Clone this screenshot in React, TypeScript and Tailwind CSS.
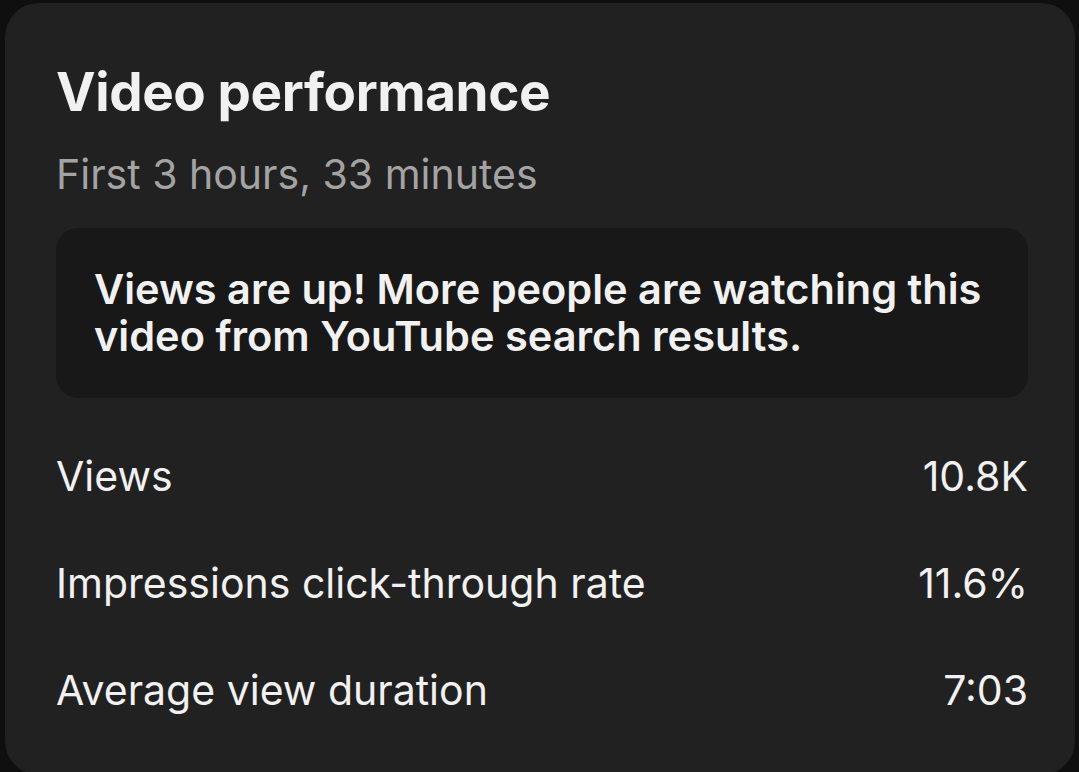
export default function App() {
  const rows = [
    { label: 'Views', value: '10.8K' },
    { label: 'Impressions click-through rate', value: '11.6%' },
    { label: 'Average view duration', value: '7:03' },
  ]

  return (
    <div className="w-[1079px] h-[772px] overflow-hidden bg-[#0f0f0f] pt-[3px] pl-[5px] pr-[4px] font-['Inter',sans-serif]">
      <div className="h-[772px] rounded-[34px] bg-[#212121] pl-[51px] pr-[47px] pt-[57px] text-[#f1f1f1]">
        <h1 className="text-[53px] leading-[64px] font-bold tracking-[-0.4px]">Video performance</h1>
        <div className="mt-[25px] text-[41px] leading-[50px] text-[#a3a3a3]">First 3 hours, 33 minutes</div>
        <div className="mt-[29px] rounded-[22px] bg-[#181818] pl-[38px] pr-[30px] pt-[38px] pb-[38px]">
          <p className="text-[41.5px] leading-[47px] font-semibold">
            Views are up! More people are watching this video from YouTube search results.
          </p>
        </div>
        <div className="mt-[54px] flex flex-col gap-[58px]">
          {rows.map(r => (
            <div key={r.label} className="flex justify-between text-[41px] leading-[49px]">
              <span>{r.label}</span>
              <span>{r.value}</span>
            </div>
          ))}
        </div>
      </div>
    </div>
  )
}
